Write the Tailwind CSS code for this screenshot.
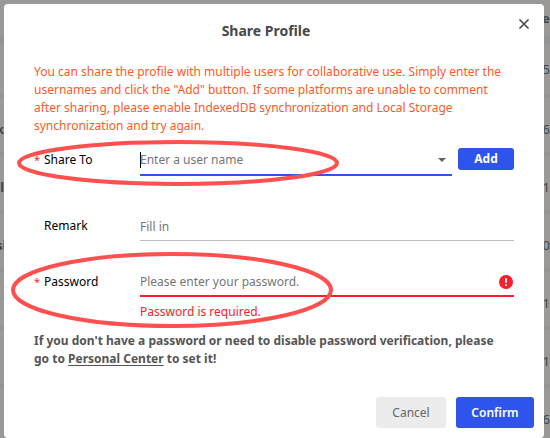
<!DOCTYPE html>
<html lang="en">
<head>
<meta charset="utf-8">
<title>Share Profile</title>
<script src="https://cdn.jsdelivr.net/npm/@tailwindcss/browser@4"></script>
</head>
<body class="relative min-h-screen overflow-hidden bg-[#9a9998] font-['Noto_Sans',sans-serif] text-xs leading-[18px] text-black">
  <!-- Dimmed profile list behind the dialog -->
  <div class="absolute inset-0 overflow-hidden text-[13px] text-[#444]" aria-hidden="true">
    <div class="flex h-9 items-center justify-end font-bold"><span class="-mr-2">ed</span></div>
    <div class="flex h-[58px] items-center justify-end border-t-8 border-[#959494]"><span>:5</span></div>
    <div class="flex h-[58px] items-center justify-between border-t-4 border-[#959494] pt-2"><span class="-ml-1 font-bold">k</span><span>6</span></div>
    <div class="flex h-[58px] items-center justify-between border-t-4 border-[#959494] pt-2"><span class="-ml-2 font-bold">ol</span><span>1</span></div>
    <div class="flex h-[58px] items-center justify-between border-t-4 border-[#959494] pt-2"><span class="-ml-1 font-bold">si</span><span>0</span></div>
    <div class="flex h-[58px] items-center justify-end border-t-4 border-[#959494] pt-2"><span>1</span></div>
    <div class="flex h-[58px] items-center justify-end border-t-4 border-[#959494] pt-2"><span>1</span></div>
    <div class="flex h-[58px] items-center justify-end border-t-4 border-[#959494] pt-2"><span>6</span></div>
  </div>

  <div role="dialog" aria-labelledby="title" class="relative mt-1 mr-[6px] ml-1 rounded bg-white">
    <header class="flex items-start pt-[10px] pr-[10px] pl-[14px]">
      <h1 id="title" class="flex-1 pt-[5px] text-center text-sm leading-6 font-bold text-[#484848]">Share Profile</h1>
      <button type="button" aria-label="Close" class="flex size-5 items-center justify-center">
        <svg class="size-3" viewBox="0 0 12 12" fill="none" stroke="#484848" stroke-width="1.6"><path d="M1.5 1.5 10.5 10.5M10.5 1.5 1.5 10.5"/></svg>
      </button>
    </header>

    <form class="pt-5">
      <div class="px-[30px]">
        <p class="text-[#fa5a28]">You can share the profile with multiple users for collaborative use. Simply enter the usernames and click the "Add" button. If some platforms are unable to comment after sharing, please enable IndexedDB synchronization and Local Storage synchronization and try again.</p>

        <div class="mt-[11px] flex h-8 items-start">
          <label for="user" class="flex w-[106px] items-center gap-[5px] pt-[5px]"><span class="w-[5px] text-[11px] text-[#f5222d]">*</span>Share To</label>
          <div class="flex h-[30px] flex-1 items-center border-b-2 border-[#2f54eb] pr-[6px]">
            <span class="h-4 w-px bg-black"></span>
            <input id="user" type="text" placeholder="Enter a user name" class="-ml-px min-w-0 flex-1 outline-none placeholder:text-[#757575]">
            <svg class="h-1 w-2" viewBox="0 0 8 4" fill="#616161"><path d="M0 0h8L4 4z"/></svg>
          </div>
          <button type="button" class="mt-[2px] ml-[6px] h-[22px] w-14 rounded-[3px] bg-[#2f54eb] leading-5 font-bold text-white">Add</button>
        </div>

        <div class="mt-[34px] flex items-start">
          <label for="remark" class="w-[106px] pt-[5px] pl-[10px]">Remark</label>
          <input id="remark" type="text" placeholder="Fill in" class="h-[29px] min-w-0 flex-1 border-b border-[#bfbfbf] outline-none placeholder:text-[#757575]">
        </div>

        <div class="mt-[27px] flex items-start">
          <label for="password" class="flex w-[106px] items-center gap-[5px] pt-[5px]"><span class="w-[5px] text-[11px] text-[#f5222d]">*</span>Password</label>
          <div class="min-w-0 flex-1">
            <div class="flex h-[29px] items-center border-b-2 border-[#fa1e2d] pr-[1px]">
              <input id="password" type="password" placeholder="Please enter your password." class="min-w-0 flex-1 outline-none placeholder:text-[#757575]">
              <svg class="size-[14px]" viewBox="0 0 14 14"><circle cx="7" cy="7" r="7" fill="#fa1e2d"/><path d="M7 3.2v4.6M7 9.3v1.8" stroke="#fff" stroke-width="1.8"/></svg>
            </div>
            <p class="pt-[6px] text-[#f5222d]">Password is required.</p>
          </div>
        </div>

        <p class="mt-[11px] pr-3 font-bold text-[#555]">If you don't have a password or need to disable password verification, please go to <a href="#" class="underline underline-offset-2">Personal Center</a> to set it!</p>
      </div>

      <footer class="mt-[29px] flex justify-end gap-[10px] pr-[10px] pb-[10px]">
        <button type="button" class="h-[31px] w-[70px] rounded-[3px] bg-[#ececec] text-[#666]">Cancel</button>
        <button type="submit" class="h-[31px] w-[78px] rounded-[3px] bg-[#2f54eb] font-semibold text-white">Confirm</button>
      </footer>
    </form>

    <!-- Hand-drawn highlights over the two required fields -->
    <svg class="pointer-events-none absolute top-[134px] left-[12px] h-[50px] w-[324px]" viewBox="0 0 324 50" fill="none" stroke="#ff5050" stroke-width="4"><ellipse cx="162" cy="25" rx="159" ry="21"/></svg>
    <svg class="pointer-events-none absolute top-[246px] left-[6px] h-[80px] w-[324px]" viewBox="0 0 324 80" fill="none" stroke="#ff5050" stroke-width="4"><ellipse cx="162" cy="40" rx="159" ry="36"/></svg>
  </div>
</body>
</html>
